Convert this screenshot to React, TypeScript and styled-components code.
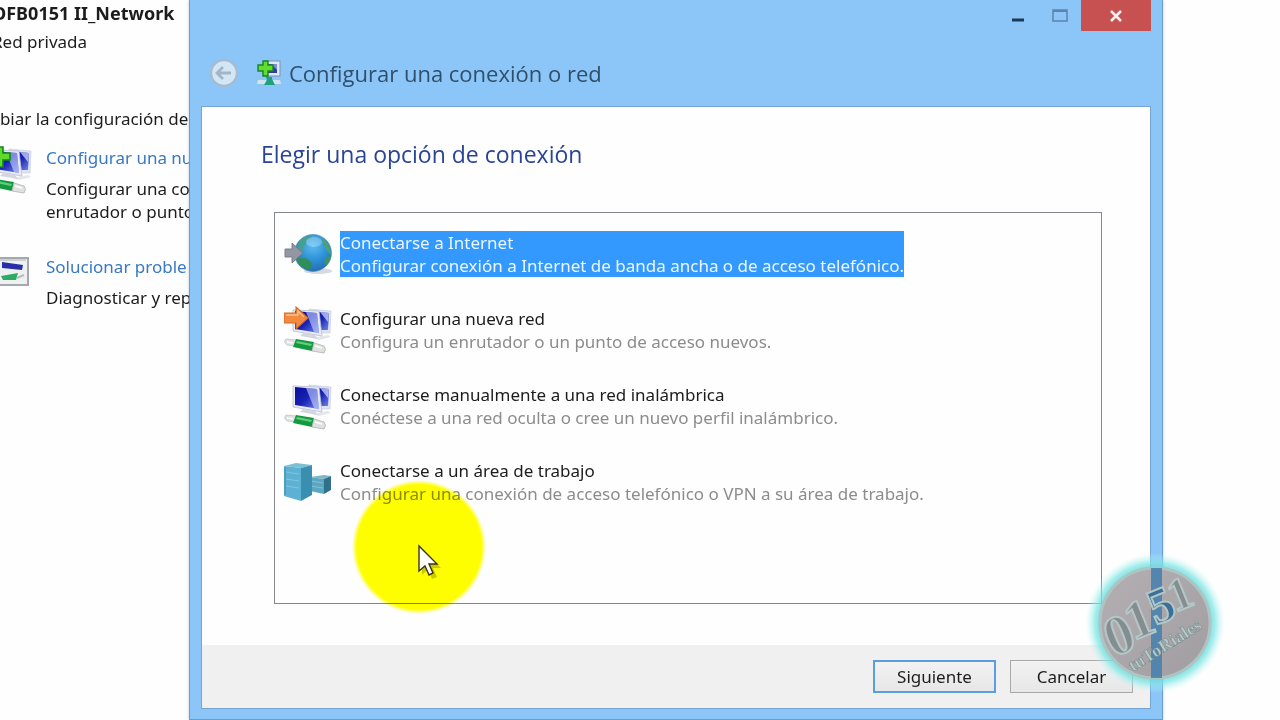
import React, { useState } from "react";
import styled, { createGlobalStyle } from "styled-components";

const GlobalStyle = createGlobalStyle`
  * { box-sizing: border-box; }
  body {
    margin: 0;
    background: #fefefe;
    color: #1c1c1c;
    font-family: "Noto Sans", "Open Sans", sans-serif;
    font-size: 17px;
    line-height: 23px;
  }
  h1, h2, p { margin: 0; padding: 0; font-weight: 400; }
  button { font: inherit; color: inherit; border: 0; padding: 0; background: none; }
`;

const Desktop = styled.div`
  position: relative;
  display: flex;
  min-height: 100vh;
  overflow: hidden;
`;

const NetworkPane = styled.aside`
  flex: none;
  width: 189px;
  overflow: hidden;
  white-space: nowrap;
`;

const PaneContent = styled.div`
  display: flex;
  flex-direction: column;
  padding-top: 2px;
`;

const NetworkName = styled.h2`
  margin-left: -8px;
  font-size: 18px;
  font-weight: 700;
`;

const NetworkKind = styled.p`
  margin: 5px 0 0 -8px;
`;

const PaneHeading = styled.p`
  margin: 54px 0 0 -16px;
`;

const Task = styled.section<{ $gap: number }>`
  display: flex;
  align-items: flex-start;
  gap: 14px;
  margin-top: ${(p) => p.$gap}px;
`;

const TaskIcon = styled.div`
  flex: none;
  width: 48px;
  height: 48px;
  margin-left: -16px;
  display: flex;
`;

const TaskLink = styled.a`
  display: block;
  margin-bottom: 8px;
  color: #3878c4;
  text-decoration: none;
`;

const Window = styled.main`
  flex: 1;
  min-width: 0;
  display: flex;
  flex-direction: column;
  margin-right: 117px;
  padding: 0 11px 10px;
  background: #8cc6f9;
  border: 1px solid #6c9dc9;
  border-top: 0;
  box-shadow: 0 0 3px rgba(80, 120, 170, 0.35);
`;

const TitleBar = styled.header`
  display: flex;
  justify-content: flex-end;
  align-items: flex-start;
  height: 46px;
`;

const CaptionButton = styled.button<{ $close?: boolean }>`
  display: grid;
  place-items: center;
  width: ${(p) => (p.$close ? 70 : 42)}px;
  height: 31px;
  background: ${(p) => (p.$close ? "#c75050" : "transparent")};
`;

const WizardBar = styled.div`
  display: flex;
  align-items: center;
  height: 54px;
  margin-bottom: 6px;
  padding-left: 7px;
`;

const BackButton = styled.button`
  display: flex;
  margin-right: 17px;
`;

const WizardTitle = styled.h1`
  margin-left: 8px;
  font-family: "Open Sans", "Noto Sans", sans-serif;
  font-size: 22px;
  line-height: 30px;
  color: #2f4f6b;
`;

const Client = styled.div`
  flex: 1;
  display: flex;
  flex-direction: column;
  background: #fefefe;
  border: 1px solid #76a6d0;
`;

const Body = styled.div`
  flex: 1;
  display: flex;
  flex-direction: column;
  padding: 31px 48px 41px 59px;
`;

const Question = styled.h2`
  margin-bottom: 42px;
  font-family: "Open Sans", "Noto Sans", sans-serif;
  font-size: 23px;
  line-height: 32px;
  color: #2b4596;
`;

const OptionList = styled.div`
  flex: 1;
  display: flex;
  flex-direction: column;
  gap: 24px;
  margin-left: 13px;
  padding: 15px 9px;
  border: 1px solid #83868c;
`;

const Option = styled.button`
  display: flex;
  align-items: center;
  gap: 8px;
  height: 52px;
  text-align: left;
`;

const OptionText = styled.span<{ $selected: boolean }>`
  display: flex;
  flex-direction: column;
  background: ${(p) => (p.$selected ? "#3399ff" : "transparent")};
  color: ${(p) => (p.$selected ? "#ecf6ff" : "#1c1c1c")};
`;

const OptionHint = styled.span<{ $selected: boolean }>`
  color: ${(p) => (p.$selected ? "#ecf6ff" : "#8c8c8c")};
`;

const Footer = styled.footer`
  display: flex;
  justify-content: flex-end;
  align-items: center;
  gap: 14px;
  height: 63px;
  padding-right: 17px;
  background: #f0f0f0;
`;

const ActionButton = styled.button<{ $primary?: boolean }>`
  width: 123px;
  height: 33px;
  background: linear-gradient(#f2f2f2, #e7e7e7);
  border: ${(p) => (p.$primary ? "2px solid #5a9de0" : "1px solid #a9a9a9")};
`;

const Spotlight = styled.div`
  position: absolute;
  left: 352px;
  top: 480px;
  width: 134px;
  height: 134px;
  mix-blend-mode: multiply;
  pointer-events: none;
  background: radial-gradient(circle closest-side, #ffff00 93%, rgba(255, 255, 0, 0) 100%);
`;

const Pointer = styled.div`
  position: absolute;
  left: 416px;
  top: 543px;
  display: flex;
  pointer-events: none;
`;

const Watermark = styled.div`
  position: absolute;
  right: 53px;
  top: 551px;
  display: flex;
  pointer-events: none;
`;

const BlueScreens = () => (
  <>
    <path d="M25 3 L47 5 L46 27 L27 27 Z" fill="#dfe4f4" stroke="#c3c9dc" strokeWidth="0.6" />
    <path d="M27 5 L45 7 L44 24 L29 24 Z" fill="url(#screen)" />
    <path d="M36 6 L45 7 L44 16 Z" fill="#dbe3ff" opacity="0.7" />
    <path d="M28 32 L44 29 L47 31 L35 34 Z" fill="#e4e6ea" />
    <path d="M9 4 L35 5 L38 30 L9 25 Z" fill="#e9ecf6" stroke="#b7bdd4" strokeWidth="0.8" />
    <path d="M11 5 L33 7 L35 27 L11 23 Z" fill="url(#screen)" />
    <path d="M22 6 L33 7 L35 27 L30 26 Z" fill="#c8d4ff" opacity="0.6" />
    <path d="M19 27 L31 29 L34 33 L16 30 Z" fill="#d3d6df" />
  </>
);

const Cable = () => (
  <>
    <path d="M2 33 L13 34 L12 40 L3 39 Q-1 36 2 33 Z" fill="#dfe2e2" stroke="#b4b8b8" strokeWidth="0.6" />
    <path d="M12 33 L30 36 L28 45 L9 41 Z" fill="#149a3e" />
    <path d="M13 35 L28 38 L27 40 L12 37 Z" fill="#62cc82" />
    <path d="M30 37 L40 40 Q43 43 40 47 L28 45 Z" fill="#e0e2e2" stroke="#aeb2b2" strokeWidth="0.8" />
    <path d="M31 40 L38 42" stroke="#fff" strokeWidth="1.5" />
    <path d="M3 36 L9 37" stroke="#fff" strokeWidth="1.5" />
  </>
);

const Plus = () => (
  <path
    d="M6 1 H13 V7 H20 V14 H13 V21 H6 V14 H0 V7 H6 Z"
    fill="#5edb2a"
    stroke="#16871b"
    strokeWidth="1.6"
  />
);

const GlobeIcon = () => (
  <svg width="48" height="48" viewBox="0 0 48 48" aria-hidden="true">
    <ellipse cx="34" cy="41" rx="14" ry="3" fill="#b8c2cc" opacity="0.6" />
    <circle cx="29" cy="23" r="18.5" fill="url(#globe)" stroke="#3f86bb" strokeWidth="0.6" />
    <path d="M14 13 Q19 6 27 5 L28 8 L23 10 L22 14 L19 19 L17 24 L12 20 Z" fill="#48a08a" opacity="0.85" />
    <path d="M38 8 Q47 14 47 25 L43 21 L39 14 Z" fill="#4ba272" />
    <path d="M13 28 L22 28 L28 33 L26 40 Q16 37 13 32 Z" fill="#2f8f5c" />
    <path d="M42 27 L47 26 Q46 32 42 36 L40 32 Z" fill="#3c9465" />
    <ellipse cx="30" cy="12" rx="8" ry="5" fill="#d8f4ff" opacity="0.3" />
    <path d="M1 19 H8 V13 L19 23 L8 33 V27 H1 Z" fill="#9396a3" stroke="#747785" strokeWidth="0.9" />
  </svg>
);

const NewNetworkIcon = () => (
  <svg width="48" height="48" viewBox="0 0 48 48" aria-hidden="true">
    <BlueScreens />
    <Cable />
    <path d="M0 7 H12 V1 L24 12 L12 23 V17 H0 Z" fill="#f48a40" stroke="#cf6a28" strokeWidth="1.1" />
    <path d="M2 9 H14 V5 L20 11" stroke="#ffc08a" strokeWidth="1.4" fill="none" />
  </svg>
);

const WirelessIcon = () => (
  <svg width="48" height="48" viewBox="0 0 48 48" aria-hidden="true">
    <BlueScreens />
    <Cable />
  </svg>
);

const WorkplaceIcon = () => (
  <svg width="48" height="48" viewBox="0 -1 48 48" aria-hidden="true">
    <path d="M26 18 L40 16 L47 17 L40 20 Z" fill="#7fb6c6" />
    <path d="M26 18 L40 20 L40 35 L26 32 Z" fill="#5ba7c2" />
    <path d="M40 20 L47 17 L47 31 L40 35 Z" fill="#2f718c" />
    <path d="M27 22 L39 24 M27 27 L39 29" stroke="#8cc8da" strokeWidth="0.8" />
    <path d="M0 7 L12 4 L28 6 L17 9 Z" fill="#7cc0d4" />
    <path d="M0 7 L17 9 L17 42 L0 37 Z" fill="#5db1d2" />
    <path d="M17 9 L28 6 L28 36 L17 42 Z" fill="#3a8fb1" />
    <path d="M2 13 L15 15 M2 20 L15 22 M2 27 L15 29" stroke="#84c8e0" strokeWidth="0.9" />
    <path d="M1 8 V36" stroke="#3e8caa" strokeWidth="1" />
  </svg>
);

const AddNetworkIcon = () => (
  <svg width="48" height="48" viewBox="0 0 48 48" aria-hidden="true">
    <BlueScreens />
    <Cable />
    <g transform="translate(6 0)">
      <Plus />
    </g>
  </svg>
);

const TroubleshootIcon = () => (
  <svg width="48" height="48" viewBox="0 0 48 48" aria-hidden="true">
    <rect x="4" y="3" width="40" height="27" fill="#eef0f2" stroke="#a4a7ac" strokeWidth="2" />
    <path d="M6 5 H42" stroke="#cbd0d6" strokeWidth="2" />
    <path d="M18 7 L39 10 L38 15 L18 13 Z" fill="#2730a8" />
    <path d="M17 21 L34 18 L32 25 L19 25 Z" fill="#2cab62" />
    <path d="M33 23 L40 20" stroke="#b8bcc0" strokeWidth="2" />
  </svg>
);

const WizardIcon = () => (
  <svg width="24" height="27" viewBox="0 0 24 27" aria-hidden="true">
    <rect x="8" y="1" width="15" height="15" fill="#dfe8f6" stroke="#7f8fae" />
    <rect x="11" y="4" width="9" height="9" fill="#2c3da5" />
    <path d="M14 4 H20 V10 Z" fill="#7d8cda" />
    <path d="M1 20 H9 V24 H0 Z M16 20 H23 L24 24 H16 Z" fill="#d2e3ea" />
    <path d="M9 17 H15 V19 L18 25 H7 L10 20 Z" fill="#21a080" />
    <path d="M6 1 H11 V5 H16 V11 H11 V16 H6 V11 H1 V5 H6 Z" fill="#63dc30" stroke="#168526" strokeWidth="1.4" />
  </svg>
);

const GradientDefs = styled.svg`
  position: absolute;
`;

const Palette = () => (
  <GradientDefs width="0" height="0" aria-hidden="true">
    <defs>
      <linearGradient id="screen" x1="0" y1="0" x2="1" y2="1">
        <stop offset="0" stopColor="#0a0d9c" />
        <stop offset="0.5" stopColor="#1722b4" />
        <stop offset="1" stopColor="#7488e4" />
      </linearGradient>
      <radialGradient id="globe" cx="0.5" cy="0.3" r="0.75">
        <stop offset="0" stopColor="#5cbcf0" />
        <stop offset="0.5" stopColor="#2f92d8" />
        <stop offset="1" stopColor="#2468ae" />
      </radialGradient>
    </defs>
  </GradientDefs>
);

const watermarkDigits = [
  { glyph: "0", x: 36, y: 84, size: 56 },
  { glyph: "1", x: 56, y: 68, size: 54 },
  { glyph: "5", x: 78, y: 54, size: 50 },
  { glyph: "1", x: 97, y: 43, size: 46 },
];

const options = [
  {
    icon: <GlobeIcon />,
    name: "Conectarse a Internet",
    hint: "Configurar conexión a Internet de banda ancha o de acceso telefónico.",
  },
  {
    icon: <NewNetworkIcon />,
    name: "Configurar una nueva red",
    hint: "Configura un enrutador o un punto de acceso nuevos.",
  },
  {
    icon: <WirelessIcon />,
    name: "Conectarse manualmente a una red inalámbrica",
    hint: "Conéctese a una red oculta o cree un nuevo perfil inalámbrico.",
  },
  {
    icon: <WorkplaceIcon />,
    name: "Conectarse a un área de trabajo",
    hint: "Configurar una conexión de acceso telefónico o VPN a su área de trabajo.",
  },
];

export default function App() {
  const [selected, setSelected] = useState(0);

  return (
    <Desktop>
      <GlobalStyle />
      <Palette />

      <NetworkPane>
        <PaneContent>
          <NetworkName>OFB0151 II_Network</NetworkName>
          <NetworkKind>Red privada</NetworkKind>
          <PaneHeading>mbiar la configuración de</PaneHeading>
          <Task $gap={16}>
            <TaskIcon>
              <AddNetworkIcon />
            </TaskIcon>
            <div>
              <TaskLink href="#nueva">Configurar una nu</TaskLink>
              <p>Configurar una co</p>
              <p>enrutador o punto</p>
            </div>
          </Task>
          <Task $gap={32}>
            <TaskIcon>
              <TroubleshootIcon />
            </TaskIcon>
            <div>
              <TaskLink href="#problemas">Solucionar proble</TaskLink>
              <p>Diagnosticar y rep</p>
            </div>
          </Task>
        </PaneContent>
      </NetworkPane>

      <Window>
        <TitleBar>
          <CaptionButton aria-label="Minimizar">
            <svg width="14" height="14" viewBox="0 0 14 14">
              <path d="M1 11 H13" stroke="#1c3a55" strokeWidth="3" />
            </svg>
          </CaptionButton>
          <CaptionButton aria-label="Maximizar">
            <svg width="16" height="14" viewBox="0 0 16 14">
              <rect x="1" y="1" width="14" height="11" fill="none" stroke="#5b85ad" strokeWidth="1.5" />
              <path d="M1 2 H15" stroke="#5b85ad" strokeWidth="2" />
            </svg>
          </CaptionButton>
          <CaptionButton $close aria-label="Cerrar">
            <svg width="14" height="14" viewBox="0 0 14 14">
              <path d="M2 2 L12 12 M12 2 L2 12" stroke="#fbeeee" strokeWidth="2.6" />
            </svg>
          </CaptionButton>
        </TitleBar>

        <WizardBar>
          <BackButton aria-label="Atrás">
            <svg width="32" height="32" viewBox="0 0 32 32">
              <circle cx="16" cy="16" r="13" fill="#d3e6f6" stroke="#a5bccf" strokeWidth="2.4" />
              <path d="M23 16 H10 M15 10 L9 16 L15 22" fill="none" stroke="#a3b6c8" strokeWidth="2.8" />
            </svg>
          </BackButton>
          <WizardIcon />
          <WizardTitle>Configurar una conexión o red</WizardTitle>
        </WizardBar>

        <Client>
          <Body>
            <Question>Elegir una opción de conexión</Question>
            <OptionList role="listbox" aria-label="Elegir una opción de conexión">
              {options.map((o, i) => (
                <Option
                  key={o.name}
                  role="option"
                  aria-selected={i === selected}
                  onClick={() => setSelected(i)}
                >
                  {o.icon}
                  <OptionText $selected={i === selected}>
                    <span>{o.name}</span>
                    <OptionHint $selected={i === selected}>{o.hint}</OptionHint>
                  </OptionText>
                </Option>
              ))}
            </OptionList>
          </Body>
          <Footer>
            <ActionButton $primary>Siguiente</ActionButton>
            <ActionButton>Cancelar</ActionButton>
          </Footer>
        </Client>
      </Window>

      <Spotlight />
      <Pointer>
        <svg width="30" height="42" viewBox="0 0 30 42" aria-hidden="true">
          <path d="M6 7 V32 L12 26 L16 36 L21 34 L17 25 H25 Z" fill="#6b6b00" opacity="0.35" />
          <path d="M3 3 V28 L9 23 L13 32 L17 30 L13 21 H21 Z" fill="#fff" stroke="#3a3410" strokeWidth="1.4" />
        </svg>
      </Pointer>

      <Watermark>
        <svg width="144" height="144" viewBox="0 0 144 144" role="img" aria-label="0151 Tutoriales">
          <defs>
            <radialGradient id="halo">
              <stop offset="0.76" stopColor="#5fd6d4" stopOpacity="0.9" />
              <stop offset="0.86" stopColor="#7de6e4" stopOpacity="0.7" />
              <stop offset="1" stopColor="#c4f7f4" stopOpacity="0" />
            </radialGradient>
            <linearGradient id="disc" x1="0" y1="0" x2="1" y2="1">
              <stop offset="0" stopColor="#b4afb2" />
              <stop offset="1" stopColor="#a09da1" />
            </linearGradient>
          </defs>
          <circle cx="72" cy="72" r="70" fill="url(#halo)" />
          <circle cx="72" cy="72" r="55" fill="url(#disc)" stroke="#adc4c3" strokeWidth="3" />
          <path d="M68 17 H79 V127 H68 Z" fill="#447fae" opacity="0.85" />
          <g
            fontFamily="Liberation Serif, serif"
            fontWeight="700"
            textAnchor="middle"
            fill="#858d91"
            stroke="#b3c7c6"
            strokeWidth="2"
          >
            {watermarkDigits.map((d) => (
              <text
                key={d.x}
                y={d.size / 3}
                fontSize={d.size}
                fill={d.glyph === "5" ? "#3d7096" : undefined}
                transform={`translate(${d.x} ${d.y}) rotate(-22)`}
              >
                {d.glyph}
              </text>
            ))}
          </g>
          <text
            fontFamily="Liberation Serif, serif"
            fontWeight="700"
            fontSize="18"
            fill="#b3cac8"
            stroke="#74898d"
            strokeWidth="0.5"
            transform="translate(50 121) rotate(-32)"
          >
            tuToRiales
          </text>
        </svg>
      </Watermark>
    </Desktop>
  );
}
